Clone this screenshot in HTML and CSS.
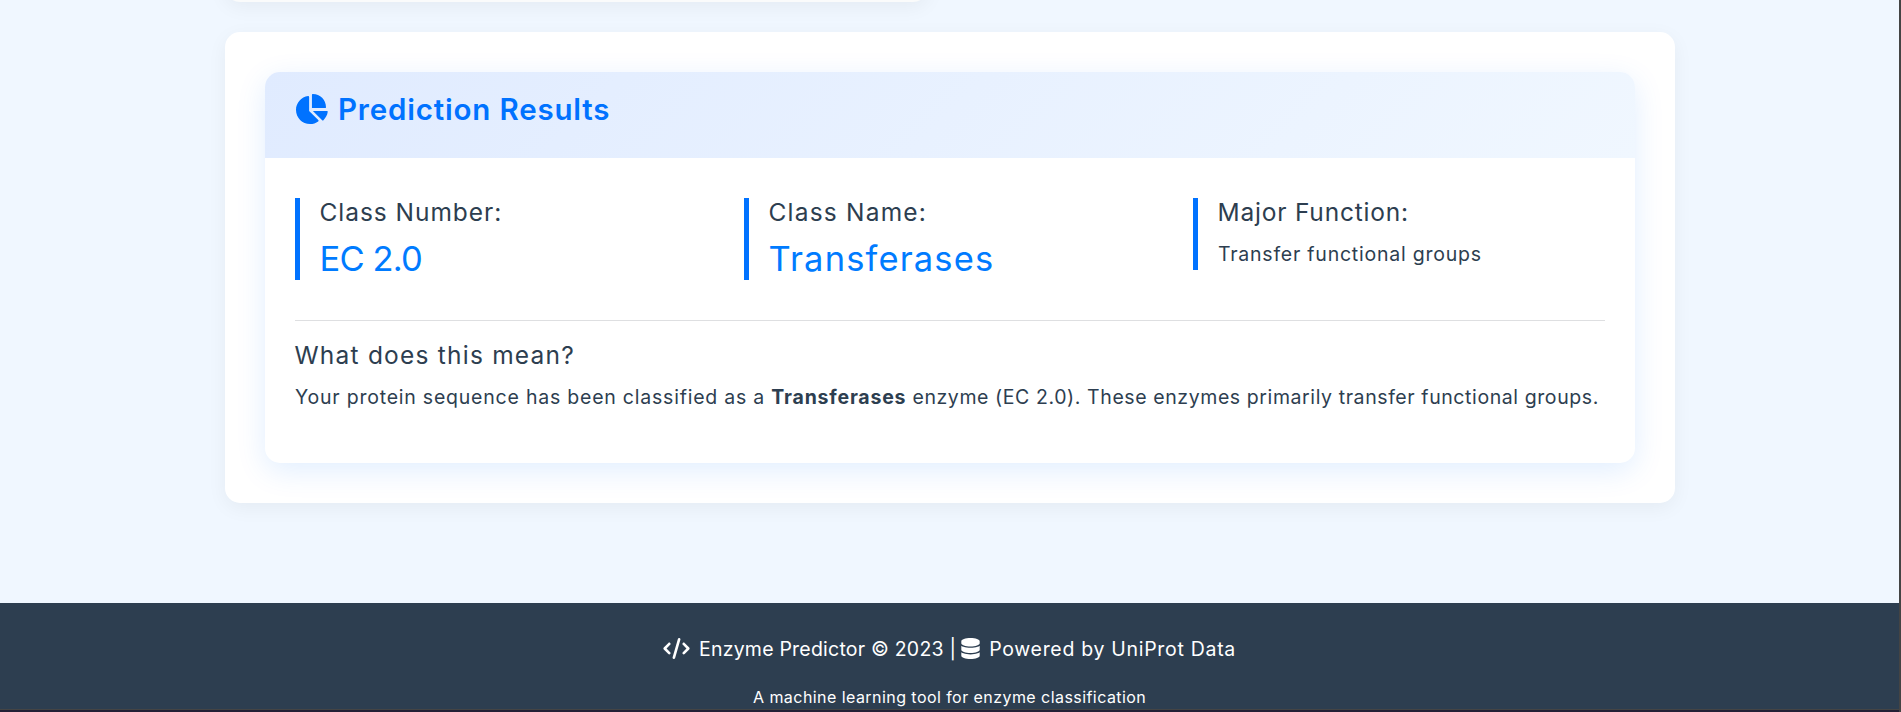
FILE: index.html
```html
<!DOCTYPE html>
<html lang="en">
<head>
<meta charset="utf-8">
<title>Enzyme Predictor</title>
<link rel="stylesheet" href="styles.css">
</head>
<body>
<main class="page">
  <div class="form-card"></div>
  <section class="card">
    <div class="result">
      <header class="result-header">
        <svg class="icon-pie" viewBox="0 0 576 512"><path d="M304 240V16.6c0-9 7-16.6 16-16.6C443.7 0 544 100.3 544 224c0 9-7.6 16-16.6 16H304zM32 272C32 150.7 122.1 50.3 239 34.3c9.2-1.3 17 6.1 17 15.4V288L412.5 444.5c6.7 6.7 6.2 17.7-1.5 23.1C371.8 495.6 323.8 512 272 512C139.5 512 32 404.6 32 272zm526.4 16c9.3 0 16.6 7.8 15.4 17c-7.7 55.9-34.6 105.6-73.9 142.3c-6 5.6-15.4 5.2-21.2-.7L320 288H558.4z"/></svg>
        <h2 class="title"><span>Prediction Results</span></h2>
      </header>
      <div class="result-body">
        <div class="facts">
          <div class="fact"><h5 class="label"><span class="ls-number">Class Number:</span></h5><p class="value"><span class="ls-ec">EC 2.0</span></p></div>
          <div class="fact"><h5 class="label"><span class="ls-name">Class Name:</span></h5><p class="value"><span class="ls-trans">Transferases</span></p></div>
          <div class="fact"><h5 class="label"><span class="ls-major">Major Function:</span></h5><p class="text"><span class="ls-func">Transfer functional groups</span></p></div>
        </div>
        <hr class="rule">
        <h5 class="label"><span class="ls-what">What does this mean?</span></h5>
        <p class="text explain"><span class="ls-a">Your protein sequence has been classified as a </span><b class="ls-b">Transferases</b><span class="ls-c"> enzyme (EC 2.0). These enzymes primarily transfer functional groups.</span></p>
      </div>
    </div>
  </section>
</main>
<footer class="footer">
  <div class="credits">
    <svg class="icon-code" viewBox="0 0 640 512"><path d="M392.8 1.2c-17-4.9-34.7 5-39.6 22l-128 448c-4.9 17 5 34.7 22 39.6s34.7-5 39.6-22l128-448c4.9-17-5-34.7-22-39.6zm80.6 120.1c-12.5 12.5-12.5 32.8 0 45.3L562.7 256l-89.4 89.4c-12.5 12.5-12.5 32.8 0 45.3s32.8 12.5 45.3 0l112-112c12.5-12.5 12.5-32.8 0-45.3l-112-112c-12.5-12.5-32.8-12.5-45.3 0zm-306.7 0c-12.5-12.5-32.8-12.5-45.3 0l-112 112c-12.5 12.5-12.5 32.8 0 45.3l112 112c12.5 12.5 32.8 12.5 45.3 0s12.5-32.8 0-45.3L77.3 256l89.4-89.4c12.5-12.5 12.5-32.8 0-45.3z"/></svg>
    <span class="ls-brand">Enzyme Predictor © 2023 |</span>
    <svg class="icon-db" viewBox="0 0 448 512"><path d="M448 80v48c0 44.2-100.3 80-224 80S0 172.2 0 128V80C0 35.8 100.3 0 224 0S448 35.8 448 80zM393.2 214.7c20.8-7.4 39.9-16.9 54.8-28.6V288c0 44.2-100.3 80-224 80S0 332.2 0 288V186.1c14.9 11.8 34 21.2 54.8 28.6C99.7 230.7 159.5 240 224 240s124.3-9.3 169.2-25.3zM0 346.1c14.9 11.8 34 21.2 54.8 28.6C99.7 390.7 159.5 400 224 400s124.3-9.3 169.2-25.3c20.8-7.4 39.9-16.9 54.8-28.6V432c0 44.2-100.3 80-224 80S0 476.2 0 432V346.1z"/></svg>
    <span class="ls-power">Powered by UniProt Data</span>
  </div>
  <p class="tagline"><span class="ls-tag">A machine learning tool for enzyme classification</span></p>
</footer>
<div class="window-edge"></div>
</body>
</html>
```
FILE: styles.css
```css
* { box-sizing: border-box; margin: 0; }
body {
  width: 1901px; height: 712px; overflow: hidden;
  border-right: 2px solid #444;
  background: #f0f7ff; color: #2d3e50;
  font-family: Inter, "Liberation Sans", sans-serif;
}
span, b { white-space: pre; }
.page { height: 603px; padding: 0 224px 0 225px; overflow: hidden; }
.form-card { width: 703px; height: 42px; margin-top: -40px; border-radius: 15px; background: #fafbfb; box-shadow: 0 5px 20px rgba(0,0,0,.05); }
.card { height: 471px; margin-top: 30px; padding: 40px; border-radius: 15px; background: #fff; box-shadow: 0 5px 20px rgba(0,0,0,.05); }
.result { height: 391px; border-radius: 15px; overflow: hidden; background: #fff; box-shadow: 0 8px 30px rgba(0,114,255,.12); }
.result-header { display: flex; height: 86px; padding: 22px 29px 0; background: linear-gradient(135deg, #e0ebff, #f0f7ff); color: #0072ff; }
.icon-pie { width: 34px; height: 30px; fill: currentColor; }
.title { margin-left: 10px; font-size: 29.5px; line-height: 30px; font-weight: 600; letter-spacing: .82px; }
.result-body { padding: 40px 30px 0; }
.facts { display: grid; grid-template-columns: repeat(3, 449px); height: 122px; align-items: start; margin-right: -40px; }
.fact { padding-left: 20px; border-left: 5px solid #0072ff; }
.label { height: 29px; font-size: 24.5px; line-height: 29px; font-weight: 400; }
.value { margin-top: 10px; height: 43px; font-size: 34.5px; line-height: 43px; color: #007bff; }
.text { margin-top: 10px; height: 33px; font-size: 19.5px; line-height: 34px; }
.label span, .value span { margin-left: -.5px; }
.rule { height: 1px; margin-bottom: 20px; border: 0; background: #dedfe1; }
.footer { height: 106px; padding-top: 35px; background: #2d3e50; color: #fff; }
.credits { display: flex; padding-left: 663px; font-size: 19.5px; line-height: 22px; }
.credits svg { height: 21px; fill: #fff; }
.icon-code { width: 27px; margin-right: 9px; }
.icon-db { width: 19px; margin: 0 9px 0 5px; }
.tagline { margin-top: 25px; padding-left: 753px; font-size: 16px; line-height: 24px; }
.window-edge { height: 3px; border-top: 1px solid #444; background: #231f35; }
.ls-number { letter-spacing: .95px; }
.ls-ec { letter-spacing: -.85px; }
.ls-name { letter-spacing: 1.2px; }
.ls-trans { letter-spacing: 1.15px; }
.ls-major { letter-spacing: .8px; }
.ls-func { letter-spacing: .77px; }
.ls-what { letter-spacing: 1.22px; }
.ls-a { letter-spacing: .78px; }
.ls-b { letter-spacing: .8px; }
.ls-c { letter-spacing: .59px; }
.ls-brand { letter-spacing: .22px; }
.ls-power { letter-spacing: .7px; }
.ls-tag { letter-spacing: .44px; }
```
